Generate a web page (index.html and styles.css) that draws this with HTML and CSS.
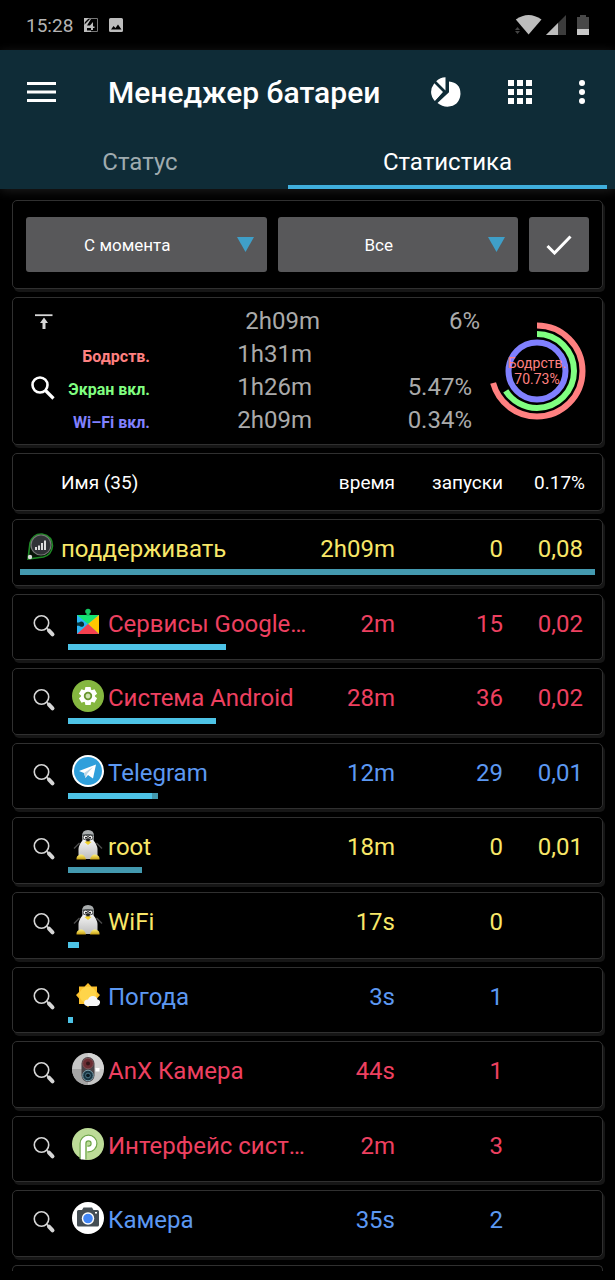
FILE: index.html
```html
<!DOCTYPE html>
<html lang="ru">
<head>
<meta charset="utf-8">
<meta name="viewport" content="width=device-width, initial-scale=1">
<title>Менеджер батареи</title>
<link rel="stylesheet" href="styles.css">
</head>
<body>
<svg class="defs" aria-hidden="true">
  <defs>
    <linearGradient id="tux-body" x1="0" y1="0" x2="0" y2="1"><stop offset="0" stop-color="#f4f4f4"/><stop offset="1" stop-color="#bdbdbd"/></linearGradient>
    <linearGradient id="tux-foot" x1="0" y1="0" x2="0" y2="1"><stop offset="0" stop-color="#fff27a"/><stop offset="1" stop-color="#c9a012"/></linearGradient>
    <symbol id="lens" viewBox="0 0 24 24">
      <circle cx="9.500" cy="9" r="7.200" fill="none" stroke="#d6d6d6" stroke-width="1.600"/>
      <path d="M14.500 14l2 2" stroke="#d6d6d6" stroke-width="1.600"/>
      <path d="M17 16.700l3.500 3.600" stroke="#d6d6d6" stroke-width="4" stroke-linecap="round"/>
    </symbol>
    <symbol id="tux" viewBox="0 0 32 32">
      <path d="M7.500 14L2 19.500M24.500 14l5.500 5.500" stroke="#4b4b4b" stroke-width="1.400"/>
      <path d="M10 7q0-6 6-6t6 6l-.5 6h-11z" fill="#a9adae"/>
      <path d="M11 11q-4 4-4.500 9-.5 6 1 10h17q1.500-4 1-10-.5-5-4.500-9z" fill="url(#tux-body)"/>
      <path d="M10.500 6.500q5.500-1.500 11 0" stroke="#444a4c" stroke-width="1.600" fill="none"/>
      <circle cx="13.600" cy="8.500" r="2.300" fill="#fff" stroke="#343434" stroke-width=".8"/>
      <circle cx="18.400" cy="8.500" r="2.300" fill="#fff" stroke="#343434" stroke-width=".8"/>
      <circle cx="14" cy="8.800" r="1" fill="#111"/><circle cx="18" cy="8.800" r="1" fill="#111"/>
      <path d="M14 10h4l-.6 3h-2.800z" fill="#222"/>
      <path d="M12.500 13q3.500-1.500 7 0L16 16z" fill="#f2d22c"/>
      <path d="M4.500 30.500q-.5-4 4-5 4-.5 5.500 5z" fill="url(#tux-foot)"/>
      <path d="M18 30.500q1.500-5.500 5.500-5 4.500 1 4 5z" fill="url(#tux-foot)"/>
    </symbol>
  </defs>
</svg>

<div class="statusbar">
  <span>15:28</span>
  <svg width="14" height="14" viewBox="0 0 14 14"><path d="M.5.5h13v13H.5z" fill="none" stroke="#777"/><path d="M0 0h5L0 5zM0 7l6-6h1L3 7.500h3L9 4v4.500h1.500v1.500H9V12H7v-2H3v2.500h4V14H0z" fill="#bdbdbd"/></svg>
  <svg width="14" height="14" viewBox="0 0 14 14"><path fill="#bdbdbd" fill-rule="evenodd" d="M1.500 0h11Q14 0 14 1.500v11q0 1.500-1.500 1.500h-11Q0 14 0 12.500v-11Q0 0 1.500 0zM2 11.500h10.500L9 6.500 6.500 10 4.500 8z"/></svg>
  <div class="signals">
    <svg width="27" height="20" viewBox="0 0 27 20"><path d="M.8 4.500Q13.500-4.500 26.500 4.500L13.600 19.500z" fill="#bdbdbd"/><path d="M0 15l2.500-3L5 15zM0 16h5l-2.500 3z" fill="#444"/></svg>
    <svg width="20" height="20" viewBox="0 0 20 20"><path d="M20 0v20H0z" fill="#3c3c3c"/><path d="M12 8v12H0z" fill="#bdbdbd"/></svg>
    <svg class="battery" width="12" height="20" viewBox="0 0 12 20"><path d="M0 2h3V0h6v2h3v18H0z" fill="#484848"/><path d="M0 14h12v6H0z" fill="#c8c8c8"/></svg>
  </div>
</div>

<header class="appbar">
  <div class="toolbar">
    <button class="icon-btn" aria-label="Меню"><svg width="30" height="22" viewBox="0 0 30 22"><path d="M0 2.500h29M0 11h29M0 19.500h29" stroke="#fff" stroke-width="3"/></svg></button>
    <h1>Менеджер батареи</h1>
    <button class="icon-btn" aria-label="Диаграмма"><svg width="30" height="30" viewBox="0 0 30 30"><path fill="#fff" d="M14.500.3v13.200L5.200 4.300Q9.200.4 14.500.3zM3.300 6.200l8.700 8.700-8 9.300Q-3.500 15.500 3.300 6.200zM18 4.500q11.500 1 11.500 12.500-1 12-13 12.700-5.500 0-10-3.700L18 15.200z"/><path d="M4 25.500L14 15" stroke="#0f2c37" stroke-width="2"/></svg></button>
    <button class="icon-btn" aria-label="Приложения"><svg width="24" height="24" viewBox="0 0 24 24"><path fill="#fff" d="M0 0h6v6H0zM9 0h6v6H9zM18 0h6v6h-6zM0 9h6v6H0zM9 9h6v6H9zM18 9h6v6h-6zM0 18h6v6H0zM9 18h6v6H9zM18 18h6v6h-6z"/></svg></button>
    <button class="icon-btn" aria-label="Ещё"><svg width="6" height="24" viewBox="0 0 6 24"><g fill="#fff"><circle cx="3" cy="3" r="3"/><circle cx="3" cy="12" r="3"/><circle cx="3" cy="21" r="3"/></g></svg></button>
  </div>
  <nav class="tabs">
    <a href="#status">Статус</a>
    <a href="#stats" class="active" aria-current="page">Статистика</a>
  </nav>
</header>

<main>
  <form class="card filters">
    <div class="picker">
      <select aria-label="Период"><option>С момента</option></select>
      <svg width="17" height="15" viewBox="0 0 17 15"><path d="M0 0h17L8.500 15z" fill="#3f9fc8"/></svg>
    </div>
    <div class="picker">
      <select aria-label="Фильтр"><option>Все</option></select>
      <svg width="17" height="15" viewBox="0 0 17 15"><path d="M0 0h17L8.500 15z" fill="#3f9fc8"/></svg>
    </div>
    <button type="button" aria-label="Применить"><svg width="26" height="20" viewBox="0 0 26 20"><path d="M1.500 11l7 7L24.500 1.500" fill="none" stroke="#fff" stroke-width="3"/></svg></button>
  </form>

  <section class="card summary">
    <table class="totals">
      <tr class="total"><td class="mark"><svg width="18" height="16" viewBox="0 0 18 16"><path d="M0 1.200h17.500" stroke="#d8d8d8" stroke-width="1.800"/><path d="M9 3.500l4 5.500h-2.500v6h-3V9H5z" fill="#d8d8d8"/></svg></td><th></th><td class="time">2h09m</td><td>6%</td></tr>
      <tr><td class="mark" rowspan="3"><button class="icon-btn" aria-label="Поиск"><svg width="24" height="24" viewBox="0 0 24 24"><circle cx="9" cy="9" r="7.500" fill="none" stroke="#fff" stroke-width="2.600"/><path d="M14.500 14.500l8 8" stroke="#fff" stroke-width="3.200"/></svg></button></td><th class="awake" scope="row">Бодрств.</th><td>1h31m</td><td></td></tr>
      <tr><th class="screen" scope="row">Экран вкл.</th><td>1h26m</td><td>5.47%</td></tr>
      <tr><th class="wifi" scope="row">Wi–Fi вкл.</th><td>2h09m</td><td>0.34%</td></tr>
    </table>
    <svg class="chart" width="98" height="98" viewBox="0 0 98 98" role="img" aria-label="Бодрств. 70.73%">
      <g fill="none" stroke-width="6" transform="rotate(-90 49 49)">
        <circle cx="49" cy="49" r="45.500" stroke="#ff8080" pathLength="100" stroke-dasharray="70.73 100"/>
        <circle cx="49" cy="49" r="37" stroke="#80ff80" pathLength="100" stroke-dasharray="66 100"/>
        <circle cx="49" cy="49" r="28.500" stroke="#8080ff"/>
      </g>
      <text x="49" y="46">Бодрств.</text>
      <text x="49" y="62">70.73%</text>
    </svg>
  </section>

  <table class="stats">
    <thead>
      <tr class="card head"><th scope="col">Имя (35)</th><th scope="col">время</th><th scope="col">запуски</th><th scope="col">0.17%</th></tr>
    </thead>
    <tbody>
      <tr class="card row base yellow">
        <td class="name"><svg class="base-icon" width="28" height="30" viewBox="0 0 28 30"><path d="M2 27L4 11Q7 1.500 16 2q10.500 2 10.500 12-1 9-9 11z" fill="#071407" stroke="#1f8a26" stroke-width="1.600"/><circle cx="15" cy="13" r="10" fill="#303236" stroke="#777" stroke-width="1.200"/><path d="M10 18v-3M13 18v-4.500M16 18v-7M19 18V8.500" stroke="#dcdcdc" stroke-width="2"/><circle cx="4" cy="25" r="2.200" fill="#ddd"/></svg><span>поддерживать</span></td>
        <td>2h09m</td><td>0</td><td>0,08</td>
        <td class="meter"><i class="dim" style="width:100%"></i></td>
      </tr>
      <tr class="card row red">
        <td class="name"><button class="icon-btn look" aria-label="Подробнее"><svg width="24" height="24"><use href="#lens"/></svg></button><svg class="app" width="32" height="32" viewBox="0 0 32 32"><path d="M5 9h22v19H5z" fill="#2bb6f5"/><path d="M5 9h22L16 18z" fill="#14e673"/><path d="M27 9v19L16 18z" fill="#ffc800"/><path d="M5 28h22L16 18z" fill="#f5404e"/><path d="M14.500 10V7.500q-2-1-1-3.500 2.500-2.500 5 0 1 2.500-1 3.500V10z" fill="#14c963"/><path d="M5 16.500h2q2.500-2 4.500 0 1.500 2.500-.5 4-2 1-4-.8H5z" fill="#06343a"/></svg><span>Сервисы Google…</span></td>
        <td>2m</td><td>15</td><td>0,02</td>
        <td class="meter"><i style="width:30%"></i></td>
      </tr>
      <tr class="card row red">
        <td class="name"><button class="icon-btn look" aria-label="Подробнее"><svg width="24" height="24"><use href="#lens"/></svg></button><svg class="app" width="32" height="32" viewBox="0 0 32 32"><circle cx="16" cy="16" r="16" fill="#85b740"/><g transform="translate(16 16)"><g fill="#fff"><circle r="7"/><path id="cog" d="M-2.600-9h5.200l.7 3.500h-6.600zM-2.600 9h5.200l.7-3.500h-6.600z"/><use href="#cog" transform="rotate(60)"/><use href="#cog" transform="rotate(120)"/></g><circle r="3.300" fill="#cfe4b0" stroke="#68952f" stroke-width="1.800"/></g></svg><span>Система Android</span></td>
        <td>28m</td><td>36</td><td>0,02</td>
        <td class="meter"><i style="width:28%"></i></td>
      </tr>
      <tr class="card row blue">
        <td class="name"><button class="icon-btn look" aria-label="Подробнее"><svg width="24" height="24"><use href="#lens"/></svg></button><svg class="app" width="32" height="32" viewBox="0 0 32 32"><circle cx="16" cy="16" r="16" fill="#fff"/><circle cx="16" cy="16" r="14" fill="#2f9fdb"/><path d="M7 16L24 9.500l-3 14-5-3.500-2.500 3-1.500-5z" fill="#fff"/><path d="M12 18l9-6-6 7-1.500 4z" fill="#bcd6e6"/></svg><span>Telegram</span></td>
        <td>12m</td><td>29</td><td>0,01</td>
        <td class="meter"><i style="width:16%"></i><i class="dim" style="width:1%"></i></td>
      </tr>
      <tr class="card row yellow">
        <td class="name"><button class="icon-btn look" aria-label="Подробнее"><svg width="24" height="24"><use href="#lens"/></svg></button><svg class="app" width="32" height="32"><use href="#tux"/></svg><span>root</span></td>
        <td>18m</td><td>0</td><td>0,01</td>
        <td class="meter"><i class="dim" style="width:14%"></i></td>
      </tr>
      <tr class="card row yellow">
        <td class="name"><button class="icon-btn look" aria-label="Подробнее"><svg width="24" height="24"><use href="#lens"/></svg></button><svg class="app" width="32" height="32"><use href="#tux"/></svg><span>WiFi</span></td>
        <td>17s</td><td>0</td><td></td>
        <td class="meter"><i style="width:2%"></i></td>
      </tr>
      <tr class="card row blue">
        <td class="name"><button class="icon-btn look" aria-label="Подробнее"><svg width="24" height="24"><use href="#lens"/></svg></button><svg class="app" width="32" height="32" viewBox="0 0 32 32"><path d="M16 4l3.500 3.500H25V13l3 3-3 3.500V25h-5.500L16 28l-3.500-3H7v-5.500L4 16l3-3V7.500h5.500z" fill="#fbc02d"/><circle cx="16" cy="16" r="8.500" fill="#ffd54a"/><path d="M15 27q-3-.5-3-3.500.5-3 4-3 1.500-4 5.500-3.500 3.500.5 4 3.500 3 .5 2.500 3.500-.5 2.500-3 3z" fill="#f6f6f6"/></svg><span>Погода</span></td>
        <td>3s</td><td>1</td><td></td>
        <td class="meter"><i style="width:1%"></i></td>
      </tr>
      <tr class="card row red">
        <td class="name"><button class="icon-btn look" aria-label="Подробнее"><svg width="24" height="24"><use href="#lens"/></svg></button><svg class="app" width="32" height="32" viewBox="0 0 32 32"><circle cx="16" cy="16" r="16" fill="#c6c6c6"/><path d="M0 16h16v16Q1 31 0 16z" fill="#a5a5a5"/><path d="M16 0v16h16Q31 1 16 0z" fill="#d4d4d4"/><rect x="9.500" y="4" width="13" height="25" rx="6.500" fill="#4a4448"/><circle cx="16" cy="10.500" r="5.300" fill="#6b2d33" stroke="#7d5357"/><circle cx="16" cy="10.500" r="2" fill="#321519"/><circle cx="16" cy="22.500" r="5.300" fill="#173442" stroke="#7ca0ad"/><circle cx="16" cy="22.500" r="2.400" fill="#0a1720" stroke="#4c7688"/><rect x="23.500" y="15" width="4" height="3.500" fill="#fff"/></svg><span>AnX Камера</span></td>
        <td>44s</td><td>1</td><td></td>
        <td class="meter"></td>
      </tr>
      <tr class="card row red">
        <td class="name"><button class="icon-btn look" aria-label="Подробнее"><svg width="24" height="24"><use href="#lens"/></svg></button><svg class="app" width="32" height="32" viewBox="0 0 32 32"><circle cx="16" cy="16" r="16" fill="#bddc98"/><g fill="none"><path d="M11 31V15.500a5.500 5.500 0 1 1 5.500 5.500h-1" stroke="#6ea54a" stroke-width="7"/><path d="M11 31.500V15.500a5.500 5.500 0 1 1 5.500 5.500h-1.500" stroke="#fff" stroke-width="4.600"/></g></svg><span>Интерфейс сист…</span></td>
        <td>2m</td><td>3</td><td></td>
        <td class="meter"></td>
      </tr>
      <tr class="card row blue">
        <td class="name"><button class="icon-btn look" aria-label="Подробнее"><svg width="24" height="24"><use href="#lens"/></svg></button><svg class="app" width="32" height="32" viewBox="0 0 32 32"><circle cx="16" cy="16" r="16" fill="#fff"/><path d="M6.500 8H10l1.500-2.500h8.500L21.500 8h4q1.500 0 1.500 1.500V23q0 1.500-1.500 1.500h-19Q5 24.500 5 23V9.500Q5 8 6.500 8z" fill="#454e54"/><circle cx="16" cy="16.500" r="6.200" fill="#fff"/><circle cx="16" cy="16.500" r="4.800" fill="#4286f5"/><rect x="23" y="10" width="2" height="1.500" fill="#fff"/></svg><span>Камера</span></td>
        <td>35s</td><td>2</td><td></td>
        <td class="meter"></td>
      </tr>
      <tr class="card peek"><td></td></tr>
    </tbody>
  </table>
</main>
</body>
</html>
```
FILE: styles.css
```css
* { box-sizing: border-box; }

body {
  margin: 0;
  height: 100vh;
  display: flex;
  flex-direction: column;
  overflow: hidden;
  background: #000;
  color: #fff;
  font-family: Roboto, "Noto Sans", sans-serif;
}

svg { display: block; flex: none; }
.defs { position: absolute; width: 0; height: 0; }

button, select { font: inherit; color: inherit; border: 0; }
.icon-btn {
  display: grid;
  place-items: center;
  padding: 0;
  background: none;
}

.statusbar {
  display: flex;
  align-items: center;
  gap: 11px;
  height: 50px;
  padding: 0 26px;
  font-size: 19px;
  color: #b4b4b4;
}
.signals { display: flex; gap: 4px; margin-left: auto; }
.battery { margin-left: 7px; }

.appbar {
  background: #0f2c37;
  box-shadow: 0 2px 10px #1c1c1c;
}
.toolbar {
  display: flex;
  align-items: center;
  height: 84px;
  padding: 0 30px 0 27px;
  gap: 47px;
}
.toolbar h1 {
  flex: 1;
  margin: 0 0 0 4px;
  font-size: 30px;
  font-weight: 500;
  white-space: nowrap;
}
.tabs {
  display: grid;
  grid-template-columns: 280fr 319fr;
  gap: 8px;
  padding-right: 8px;
}
.tabs a {
  height: 55px;
  line-height: 56px;
  text-align: center;
  text-decoration: none;
  font-size: 24px;
  color: #9fabaf;
}
.tabs .active { color: #fff; border-bottom: 4px solid #3fafdd; }

main {
  flex: 1;
  min-height: 0;
  display: flex;
  flex-direction: column;
  gap: 8px;
  padding: 11px 12px 9px;
}

.card {
  background: #000;
  border: 1px solid #303030;
  border-radius: 5px;
  box-shadow: 2px 3px 0 #161616;
}

.filters {
  display: grid;
  grid-template-columns: 1fr 1fr 60px;
  gap: 11px;
  padding: 16px 13px;
}
.picker { position: relative; }
.picker select {
  width: 100%;
  height: 55px;
  padding: 0 38px 0 0;
  appearance: none;
  border-radius: 3px;
  background: #58585a;
  font-size: 17px;
  text-align: center;
  text-align-last: center;
}
.picker svg { position: absolute; right: 13px; top: 20px; pointer-events: none; }
.filters button {
  display: grid;
  place-items: center;
  border-radius: 3px;
  background: #58585a;
}

.summary {
  display: flex;
  justify-content: space-between;
  align-items: center;
  padding: 7px 16px 7px 7px;
}
.totals {
  width: 460px;
  table-layout: fixed;
  border-collapse: collapse;
  font-size: 24px;
  color: #aaa;
}
.totals tr { height: 33px; }
.totals td, .totals th { padding: 2px 0 0; text-align: right; line-height: 28px; vertical-align: baseline; }
.totals td + td, .totals th + td { padding-right: 8px; }
.totals .total td { padding-right: 0; }
.totals .time { width: 170px; }
.totals .mark { width: 47px; padding: 0; vertical-align: middle; }
.totals .mark svg { margin: auto; }
.totals .mark .icon-btn { width: 46px; }
.totals th { width: 83px; font-size: 16px; font-weight: 700; white-space: nowrap; }
.awake { color: #ff8080; }
.screen { color: #80ff80; }
.wifi { color: #8080ff; }
.chart text { fill: #ff8080; font-size: 14px; text-anchor: middle; }

.stats {
  flex: 1;
  min-height: 0;
  display: grid;
  grid-template-rows: 58px repeat(10, 1fr) 6px;
  gap: 8px;
}
.stats thead, .stats tbody { display: contents; }
.head, .row {
  display: grid;
  grid-template-columns: minmax(0, 1fr) 90px 108px 80px 12px;
  padding: 0 7px;
}
.head {
  grid-template-columns: minmax(0, 1fr) 90px 108px 82px 10px;
  align-items: center;
  font-size: 19px;
}
.head th { padding: 0; font-weight: 400; text-align: right; }
.head th:first-child { padding-left: 41px; text-align: left; }

.row {
  grid-template-rows: 36px 6px;
  align-content: start;
  row-gap: 2px;
  padding-top: 11px;
  font-size: 24px;
}
.row td { padding: 0; line-height: 36px; text-align: right; }
.row .name { display: flex; align-items: center; white-space: nowrap; }
.row .meter { grid-column: 1 / -1; display: flex; height: 6px; padding-left: 48px; }
.row.base .meter { padding-left: 0; }
.meter i { background: #4dc3e6; }
.meter .dim { background: #4399af; }
.look { flex: none; width: 48px; height: 36px; padding-top: 4px; }
.app { margin: 0 4px 4px; }
.base-icon { margin: 0 7px 4px 6px; }

.red { color: #ee4060; }
.blue { color: #5c98f2; }
.yellow { color: #f8e768; }

.peek {
  border-bottom: 0;
  border-radius: 5px 5px 0 0;
  box-shadow: none;
}
```
